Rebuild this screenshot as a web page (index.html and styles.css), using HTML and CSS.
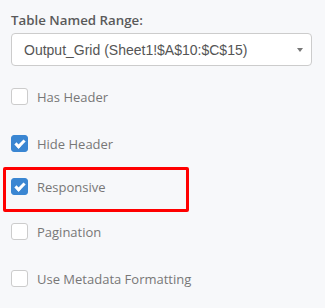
FILE: index.html
```html
<!DOCTYPE html>
<html lang="en">
<head>
    <meta charset="UTF-8">
    <title>Table Options</title>
    <link rel="stylesheet" href="styles.css">
</head>
<body>
<div class="panel">
    <label class="field-label">Table Named Range:</label>
    <div class="select-box">
        <span class="select-text">Output_Grid (Sheet1!$A$10:$C$15)</span>
        <span class="select-arrow"></span>
    </div>
    <ul class="options">
        <li class="option"><span class="check"></span><span class="opt-text">Has Header</span></li>
        <li class="option"><span class="check checked"></span><span class="opt-text">Hide Header</span></li>
        <li class="option highlight"><span class="check checked"></span><span class="opt-text">Responsive</span></li>
        <li class="option"><span class="check"></span><span class="opt-text">Pagination</span></li>
        <li class="option"><span class="check"></span><span class="opt-text">Use Metadata Formatting</span></li>
    </ul>
</div>
</body>
</html>
```

FILE: styles.css
```css
html, body{
    margin: 0;
    padding: 0;
    background-color: #f7f8fa;
}
.panel{
    padding: 11px 13px 0 11px;
    font-family: "Open Sans", "Liberation Sans", sans-serif;
}
.field-label{
    display: block;
    font-size: 13.3px;
    font-weight: 600;
    color: #5a5a5a;
    line-height: 18px;
}
.select-box{
    display: flex;
    align-items: center;
    margin-top: 4px;
    height: 31px;
    border: 1px solid #ccc;
    border-radius: 4px;
    background-color: #fff;
    padding: 0 8px 0 12px;
}
.select-text{
    flex: 1;
    font-family: "Liberation Sans", Arial, sans-serif;
    font-size: 14px;
    color: #555;
}
.select-arrow{
    width: 0;
    height: 0;
    border-left: 3px solid transparent;
    border-right: 3px solid transparent;
    border-top: 4px solid #777;
}
.options{
    list-style: none;
    margin: 22px 0 0 0;
    padding: 0;
}
.option{
    display: flex;
    align-items: center;
    height: 17px;
    margin-bottom: 30px;
    position: relative;
}
.option:nth-child(2){
    margin-bottom: 26px;
}
.option:nth-child(3){
    margin-bottom: 28px;
}
.check{
    box-sizing: border-box;
    width: 17px;
    height: 17px;
    border: 1px solid #ccc;
    border-radius: 3px;
    background-color: #fff;
    position: relative;
}
.check.checked{
    background-color: #3a86d2;
    border-color: #3a86d2;
}
.check.checked::after{
    content: "";
    position: absolute;
    left: 5px;
    top: 2px;
    width: 3px;
    height: 7px;
    border-right: 3px solid #fff;
    border-bottom: 3px solid #fff;
    transform: rotate(45deg);
}
.opt-text{
    margin-left: 9px;
    font-size: 13px;
    color: #777;
}
/*highlight frame*/
.highlight::before{
    content: "";
    position: absolute;
    left: -8px;
    top: -11px;
    width: 180px;
    height: 39px;
    border: 3px solid #f00;
    border-radius: 2px;
}
```
